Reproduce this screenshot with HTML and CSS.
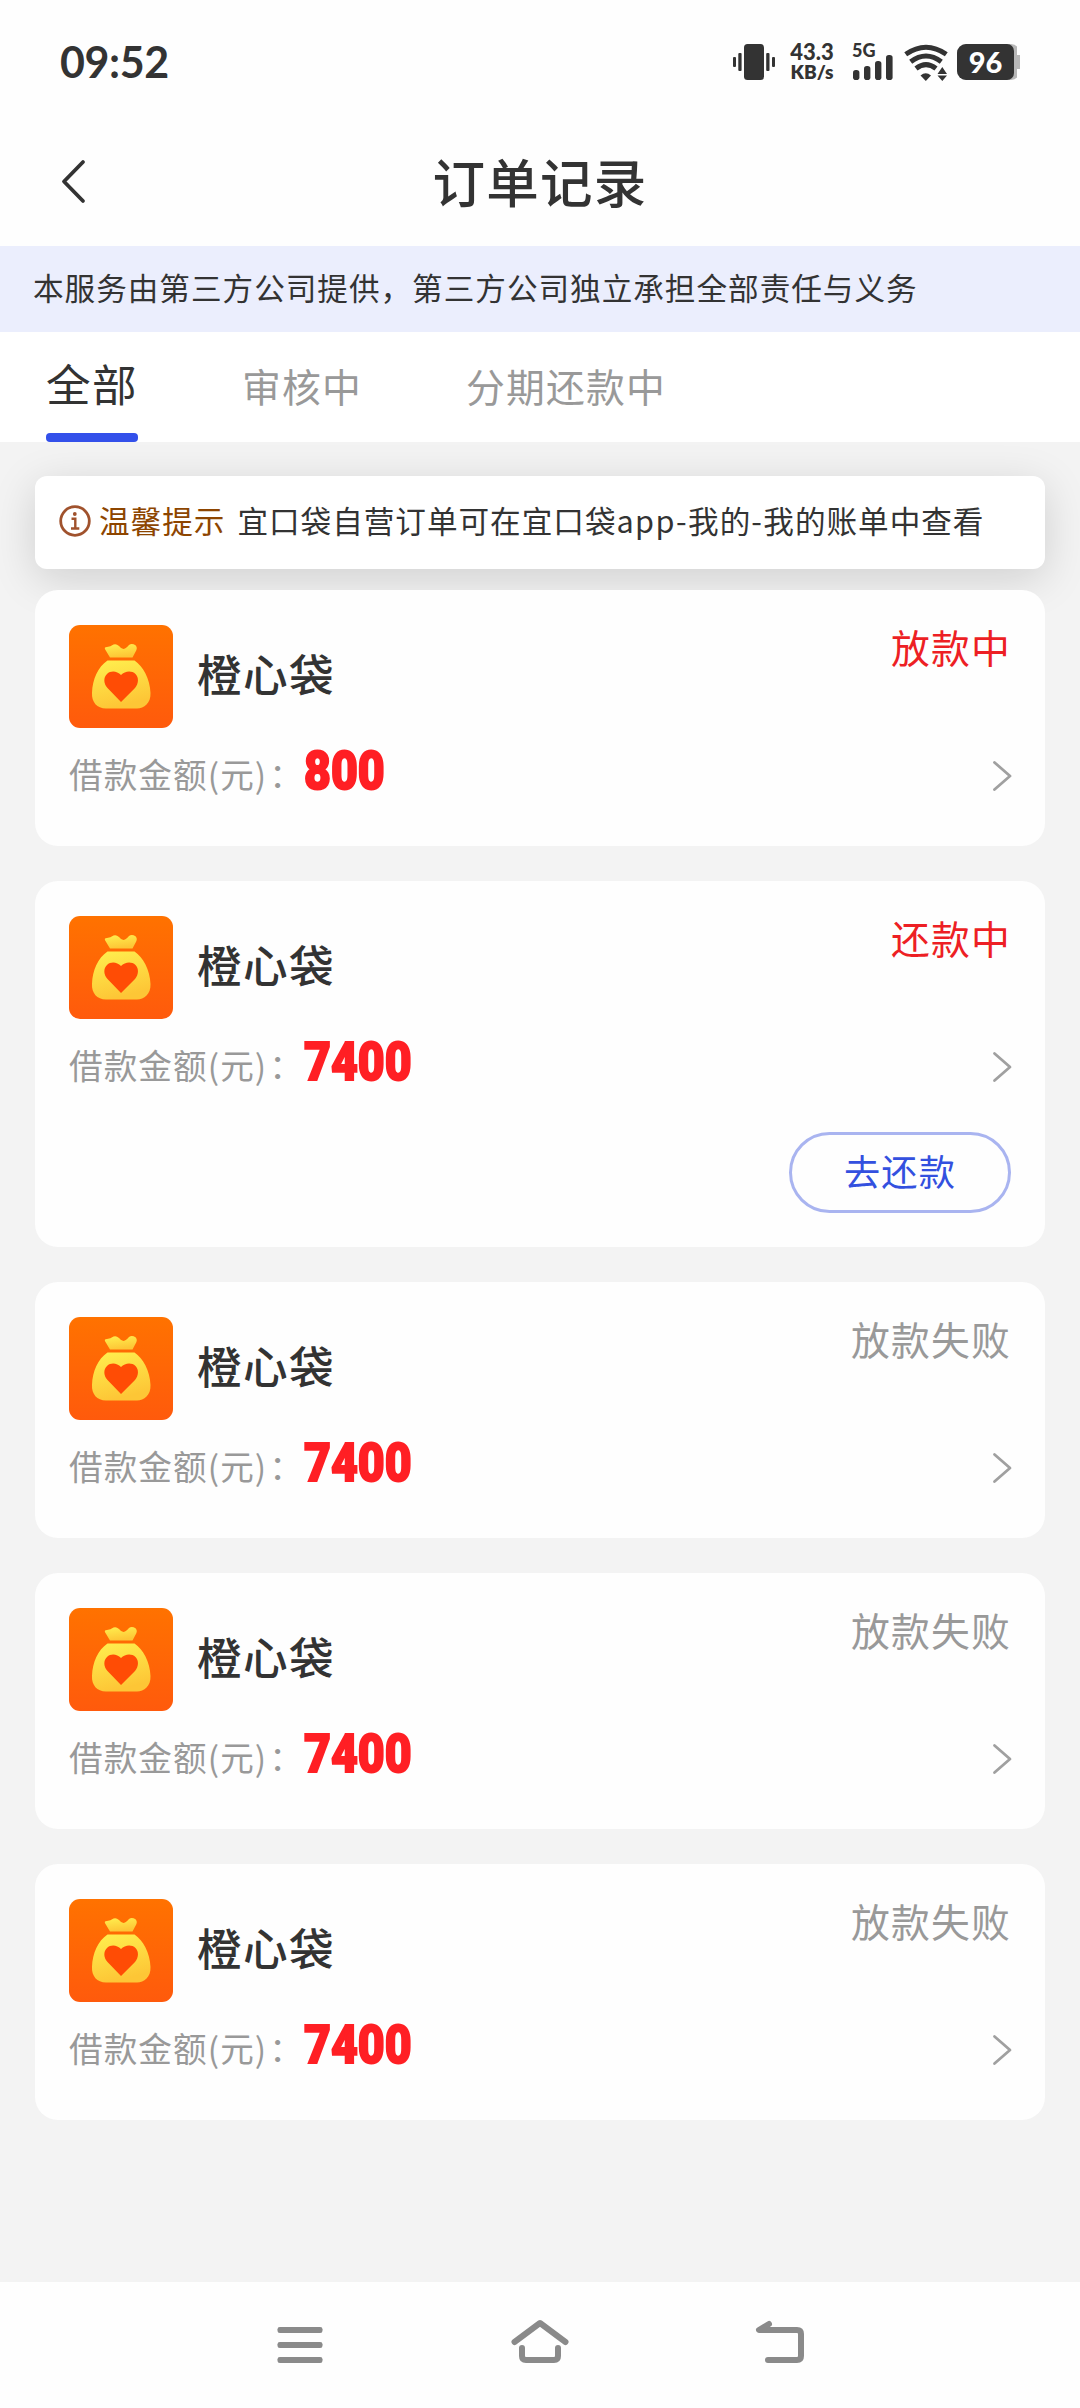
FILE: index.html
```html
<!DOCTYPE html>
<html lang="zh-CN">
<head>
<meta charset="utf-8">
<title>订单记录</title>
<link rel="stylesheet" href="styles.css">
</head>
<body>
<svg class="defs" width="0" height="0" aria-hidden="true">
  <defs>
    <linearGradient id="tile" x1="0" y1="0" x2="0" y2="1"><stop offset="0" stop-color="#ff7200"/><stop offset="1" stop-color="#ff5a0c"/></linearGradient>
    <linearGradient id="gold" x1="0" y1="0" x2="0.3" y2="1"><stop offset="0" stop-color="#fff04f"/><stop offset="1" stop-color="#fdc636"/></linearGradient>
    <symbol id="bag" viewBox="0 0 104 103">
      <rect width="104" height="103" rx="11" fill="url(#tile)"/>
      <path d="M41 32.500L36.500 25Q34.500 22 38 22Q41.500 22 44.500 19.600Q47 18.300 50 21Q52.800 24.800 56 23.600Q58.300 22 60 19.900Q63 18 66.500 20.300Q68.700 22.500 67.200 25.500L63.500 32.500Z" fill="url(#gold)"/>
      <path d="M38.500 35.500H65.500C74 41 81 54 81.500 68C82 78 75 83.500 68 83.500H37C28 83.500 22.500 77 23 68C23.500 54 29 42 38.500 35.500Z" fill="url(#gold)"/>
      <path d="M52 77L38.500 63C34.500 58.500 34.300 52.500 38 49C42 45.300 48 46 52 50C56 46 62.500 45.300 66.500 49C70 52.500 69.800 58.500 66 63Z" fill="#ff4c05"/>
    </symbol>
    <symbol id="chevron" viewBox="0 0 22 34"><path d="M3.500 3.500L19 17L3.500 30.500" fill="none" stroke="#a0a0a0" stroke-width="2.800" stroke-linecap="round" stroke-linejoin="round"/></symbol>
  </defs>
</svg>

<div class="statusbar">
  <span class="clock">09:52</span>
  <div class="indicators">
    <svg class="vibrate" width="42" height="36" viewBox="0 0 42 36" fill="#333">
      <rect x="11" width="20" height="36" rx="3.500"/>
      <rect x="5.300" y="9" width="3.300" height="18" rx="1"/><rect x="0" y="13" width="3" height="10" rx="1"/>
      <rect x="33.200" y="9" width="3.300" height="18" rx="1"/><rect x="39" y="13" width="3" height="10" rx="1"/>
    </svg>
    <div class="speed"><span class="rate">43.3</span><span class="unit">KB/s</span></div>
    <div class="signal">
      <span class="net">5G</span>
      <svg width="40" height="26" viewBox="0 0 40 26" fill="#333"><rect y="16" width="6.400" height="10" rx="2.800"/><rect x="11" y="12" width="6.400" height="14" rx="2.800"/><rect x="22" y="7" width="6.400" height="19" rx="2.800"/><rect x="33" y="1" width="6.600" height="25" rx="2.800"/></svg>
    </div>
    <svg class="wifi" width="44" height="37" viewBox="0 0 44 37">
      <g fill="none" stroke="#333" stroke-width="5"><path d="M1.700 10.300Q22-3.800 42.300 10.300"/><path d="M6.700 17.800Q22 6.200 37.300 17.800"/><path d="M12 24.500Q22 16.700 32 24.500"/></g>
      <path d="M16.500 31.500Q21.800 27 27 31.500L21.800 37Z" fill="#333"/>
      <path d="M33.500 30L38.300 23L43 30ZM33.500 31.500H43L38.300 37Z" fill="#333"/>
    </svg>
    <div class="battery"><div class="charge"><span class="percent">96</span></div></div>
  </div>
</div>

<header class="titlebar">
  <svg class="back" width="30" height="48" viewBox="0 0 30 48"><path d="M25 5L6 24.500L25 44" fill="none" stroke="#333" stroke-width="3.800" stroke-linecap="round" stroke-linejoin="round"/></svg>
  <h1 class="title">订单记录</h1>
</header>

<p class="disclaimer">本服务由第三方公司提供，第三方公司独立承担全部责任与义务</p>

<nav class="tabs">
  <a class="tab tab-active">全部</a>
  <a class="tab">审核中</a>
  <a class="tab">分期还款中</a>
</nav>

<main class="content">
  <div class="notice">
    <svg width="32" height="32" viewBox="0 0 32 32"><circle cx="16" cy="16" r="14.300" fill="none" stroke="#a0522d" stroke-width="2.800"/><circle cx="15.800" cy="9" r="1.900" fill="#a0522d"/><path d="M12.500 13.800H16.300V23M12 23.500H20.300" fill="none" stroke="#a0522d" stroke-width="2.400"/></svg>
    <span class="notice-label">温馨提示</span>
    <span class="notice-text">宜口袋自营订单可在宜口袋<span class="latin">app-</span>我的<span class="latin">-</span>我的账单中查看</span>
  </div>

  <section class="orders">
    <article class="card">
      <div class="card-head"><svg class="logo"><use href="#bag"/></svg><h2 class="name">橙心袋</h2><span class="state state-live">放款中</span></div>
      <div class="card-row"><span class="label">借款金额(元<span class="paren">)</span>：</span><span class="amount">800</span><svg class="go"><use href="#chevron"/></svg></div>
    </article>
    <article class="card">
      <div class="card-head"><svg class="logo"><use href="#bag"/></svg><h2 class="name">橙心袋</h2><span class="state state-live">还款中</span></div>
      <div class="card-row"><span class="label">借款金额(元<span class="paren">)</span>：</span><span class="amount">7400</span><svg class="go"><use href="#chevron"/></svg></div>
      <button class="repay">去还款</button>
    </article>
    <article class="card">
      <div class="card-head"><svg class="logo"><use href="#bag"/></svg><h2 class="name">橙心袋</h2><span class="state">放款失败</span></div>
      <div class="card-row"><span class="label">借款金额(元<span class="paren">)</span>：</span><span class="amount">7400</span><svg class="go"><use href="#chevron"/></svg></div>
    </article>
    <article class="card">
      <div class="card-head"><svg class="logo"><use href="#bag"/></svg><h2 class="name">橙心袋</h2><span class="state">放款失败</span></div>
      <div class="card-row"><span class="label">借款金额(元<span class="paren">)</span>：</span><span class="amount">7400</span><svg class="go"><use href="#chevron"/></svg></div>
    </article>
    <article class="card">
      <div class="card-head"><svg class="logo"><use href="#bag"/></svg><h2 class="name">橙心袋</h2><span class="state">放款失败</span></div>
      <div class="card-row"><span class="label">借款金额(元<span class="paren">)</span>：</span><span class="amount">7400</span><svg class="go"><use href="#chevron"/></svg></div>
    </article>
  </section>
</main>

<footer class="navbar">
  <svg width="60" height="48" viewBox="0 0 60 48" fill="#8a8a8a"><rect x="7.500" y="9" width="45" height="6" rx="2.300"/><rect x="7.500" y="24" width="45" height="6" rx="2.300"/><rect x="7.500" y="39" width="45" height="6" rx="2.300"/></svg>
  <svg width="60" height="48" viewBox="0 0 60 48" fill="none" stroke="#8a8a8a" stroke-width="6" stroke-linecap="round" stroke-linejoin="round"><path d="M4.500 24L30 5L55.500 24"/><path d="M12 30V38Q12 42 16 42H44Q48 42 48 38V30"/></svg>
  <svg width="60" height="48" viewBox="0 0 60 48" fill="none" stroke="#8a8a8a" stroke-width="6" stroke-linecap="round" stroke-linejoin="round"><path d="M19 6L9 12H47Q51 12 51 16V38Q51 42 47 42H18"/></svg>
</footer>
</body>
</html>
```
FILE: styles.css
```css
* { box-sizing: border-box; }
body {
  margin: 0;
  width: 1080px;
  height: 2408px;
  display: flex;
  flex-direction: column;
  background: #f3f3f3;
  color: #333;
  font-family: "Noto Sans CJK SC", sans-serif;
  overflow: hidden;
}
svg { display: block; flex: none; }
.defs { position: absolute; }
h1, h2, p { margin: 0; }

.statusbar {
  flex: none;
  height: 124px;
  padding: 0 60px 0 60px;
  display: flex;
  align-items: center;
  justify-content: space-between;
  background: #fefefe;
  font-family: Lato, "Noto Sans", sans-serif;
}
.clock { font-size: 43px; font-weight: 700; letter-spacing: -0.4px; line-height: 1; margin-bottom: 2px; }
.indicators { display: flex; align-items: center; height: 36px; }
.speed {
  margin-left: 14px;
  width: 46px;
  display: flex;
  flex-direction: column;
  align-items: center;
  font-weight: 900;
  white-space: nowrap;
}
.rate { font-size: 22px; line-height: 20px; }
.unit { font-size: 19px; line-height: 20px; font-weight: 800; }
.signal { margin-left: 17px; width: 42px; height: 36px; display: flex; flex-direction: column; }
.net { font-size: 18px; line-height: 13px; height: 10px; font-weight: 900; }
.signal svg { margin-left: 1px; }
.wifi { margin-left: 10px; }
.battery {
  margin-left: 9px;
  width: 63px;
  height: 36px;
  padding-right: 6px;
  border-radius: 9px;
  background: linear-gradient(#b8b8b8, #b8b8b8) left / 60px 100% no-repeat, linear-gradient(#b8b8b8, #b8b8b8) right / 5px 14px no-repeat;
}
.charge {
  height: 36px;
  display: flex;
  align-items: center;
  justify-content: center;
  border-radius: 9px 7px 7px 9px;
  background: #333;
  color: #fff;
}
.percent { font-size: 29px; font-weight: 900; line-height: 36px; }

.titlebar {
  flex: none;
  height: 122px;
  padding: 0 58px 8px;
  display: grid;
  grid-template-columns: 30px 1fr 30px;
  align-items: center;
  background: #fefefe;
}
.title { padding-bottom: 3px; text-align: center; font-size: 52.5px; letter-spacing: 1.3px; line-height: 64px; font-weight: 500; }

.disclaimer {
  flex: none;
  height: 86px;
  padding-left: 33px;
  background: #ebeefd;
  font-size: 30.6px;
  letter-spacing: 1px;
  line-height: 83px;
  white-space: nowrap;
}

.tabs {
  flex: none;
  position: relative;
  z-index: 1;
  height: 110px;
  padding-left: 46px;
  display: flex;
  gap: 104px;
  background: #fff;
}
.tab { font-size: 38.8px; letter-spacing: 1.2px; line-height: 106px; color: #999; }
.tab-active {
  font-size: 44.6px;
  letter-spacing: 1.4px;
  line-height: 102px;
  color: #333;
  display: flex;
  flex-direction: column;
}
.tab-active::after { content: ""; flex: none; margin-top: -1px; height: 9px; border-radius: 4px; background: #3350ea; }

.content { flex: 1; padding: 34px 35px 0; display: flex; flex-direction: column; gap: 21px; }
.notice {
  flex: none;
  height: 93px;
  padding: 0 24px 3px;
  display: flex;
  align-items: center;
  border-radius: 12px;
  background: #fff;
  box-shadow: 0 10px 44px rgba(0, 0, 0, 0.15);
  font-size: 30.6px;
  letter-spacing: 1px;
  line-height: 48px;
  white-space: nowrap;
}
.notice-label, .notice-text { padding-bottom: 3px; }
.notice-label { margin-left: 8px; color: #8d4500; }
.notice-text { margin-left: 12px; }
.latin { letter-spacing: 1.4px; }

.orders { position: relative; display: flex; flex-direction: column; gap: 35px; }
.card {
  padding: 35px 34px 34px;
  display: flex;
  flex-direction: column;
  border-radius: 23px;
  background: #fefefe;
}
.card-head { height: 103px; display: flex; align-items: center; }
.logo { width: 104px; height: 103px; }
.name { margin-left: 24px; padding-bottom: 8px; font-size: 44.6px; letter-spacing: 1.4px; line-height: 64px; font-weight: 500; }
.state { margin-left: auto; align-self: flex-start; margin-top: -9px; font-size: 38.8px; letter-spacing: 1.2px; line-height: 60px; color: #999; }
.state-live { color: #ed1f24; }
.card-row { height: 72px; margin-top: 12px; display: flex; align-items: center; }
.label { padding-bottom: 4px; font-size: 33.6px; letter-spacing: 1.1px; line-height: 52px; color: #999; }
.paren { letter-spacing: 3px; }
.amount {
  font-family: Roboto, sans-serif;
  font-size: 54px;
  line-height: 62px;
  font-weight: 900;
  color: #ff1f24;
  -webkit-text-stroke: 2px #ff1f24;
  transform: scaleX(0.86);
  transform-origin: left;
  margin-top: -10px;
}
.go { width: 22px; height: 34px; margin-left: auto; margin-right: -2px; }
.repay {
  align-self: flex-end;
  margin-top: 29px;
  width: 222px;
  height: 81px;
  padding: 0 0 6px;
  border: 3px solid #a9b4f0;
  border-radius: 41px;
  background: transparent;
  color: #3350df;
  font: 400 36.2px/54px "Noto Sans CJK SC", sans-serif;
  letter-spacing: 1.1px;
}

.navbar {
  flex: none;
  height: 126px;
  padding: 36px 270px 0;
  display: flex;
  align-items: flex-start;
  justify-content: space-between;
  background: #fefefe;
}
```
